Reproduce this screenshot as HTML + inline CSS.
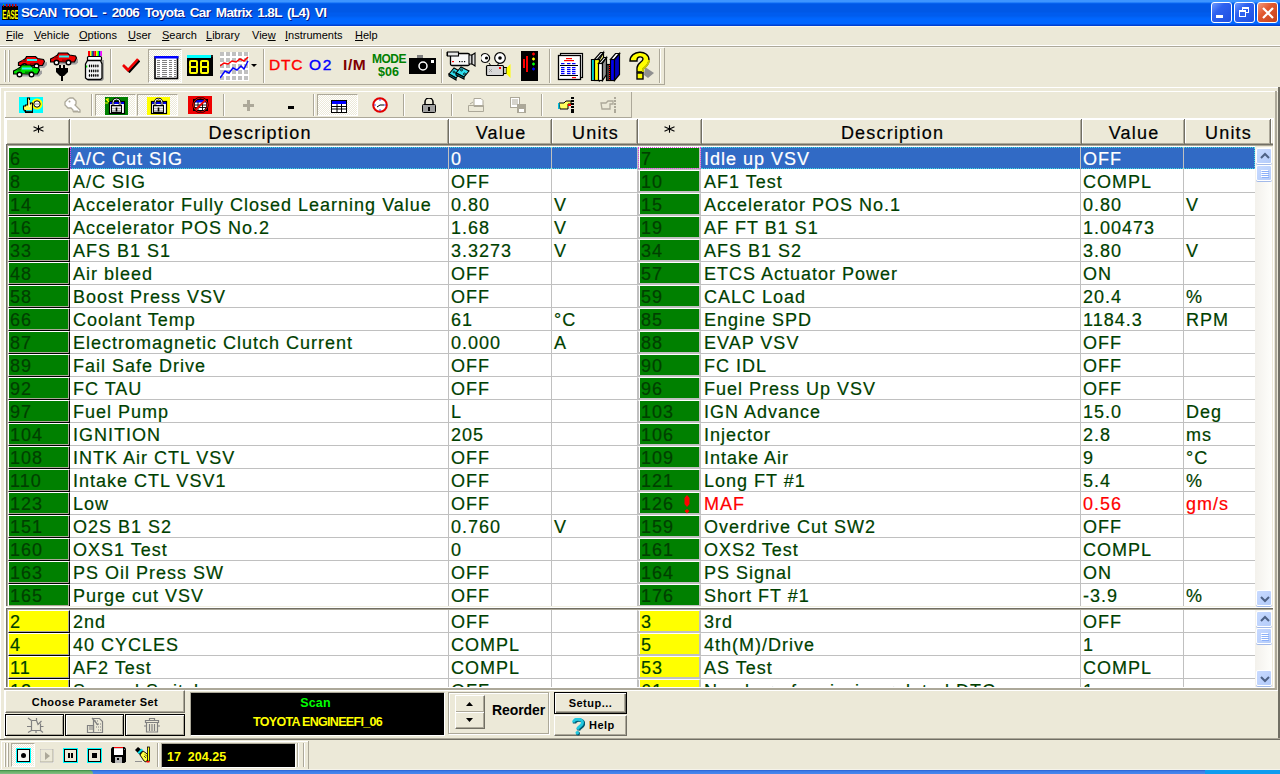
<!DOCTYPE html><html><head><meta charset="utf-8"><style>
*{margin:0;padding:0;box-sizing:border-box}
html,body{width:1280px;height:774px;overflow:hidden;background:#ECE9D8;font-family:"Liberation Sans",sans-serif}
#root{position:relative;width:1280px;height:774px;overflow:hidden}
.ab{position:absolute}
.t{position:absolute;white-space:nowrap}
.mi{position:absolute;top:25px;height:20px;line-height:20px;font-size:11px;color:#000}
.mi u{text-decoration:underline;text-underline-offset:1px;text-decoration-thickness:1px}
.row{position:absolute;height:23px;line-height:25px;font-size:18px;letter-spacing:1px;color:#003F00;white-space:nowrap;-webkit-text-stroke:0.2px currentColor}
.c{position:absolute;top:0;height:23px;overflow:hidden}
.hd{position:absolute;top:120px;height:24px;line-height:26px;font-size:18px;letter-spacing:1.2px;color:#000;text-align:center;-webkit-text-stroke:0.2px #000}
.sep{position:absolute;width:2px;border-left:1px solid #ACA899;border-right:1px solid #fff}
.dither{background-color:#F4F3EE;background-image:repeating-conic-gradient(#fff 0 25%,#ECE9D8 0 50%);background-size:2px 2px}
</style></head><body><div id="root">
<div class="ab" style="left:0;top:0;width:1280px;height:26px;background:linear-gradient(to bottom,#3D95FF 0px,#3D95FF 2px,#0A6AF5 3px,#0058E6 4px,#0058E6 12px,#005CEE 13px,#005CEE 16px,#0062F5 17px,#0066FF 19px,#0066FF 24px,#0040D0 25px,#0040D0 26px)"></div><svg class="ab" style="left:2px;top:3px" width="16" height="17" viewBox="0 0 16 17"><rect x="0" y="3" width="16" height="14" fill="#000"/><rect x="1" y="1" width="1" height="2" fill="#00FF00"/><rect x="1" y="2" width="1" height="2" fill="#C00000"/><rect x="4" y="1" width="1.5" height="3" fill="#C00000"/><rect x="7" y="1" width="1.5" height="3" fill="#C00000"/><rect x="10" y="1" width="1.5" height="3" fill="#C00000"/><rect x="13" y="1" width="1.5" height="3" fill="#C00000"/><g transform="translate(0.2,15.5) scale(0.47,1)"><text x="0" y="0" font-family="Liberation Sans" font-weight="bold" font-size="13.5" fill="#FFFF00" letter-spacing="-0.6">EASE</text></g></svg><div class="t" style="left:21px;top:4px;line-height:18px;font-size:13.5px;letter-spacing:-0.65px;word-spacing:2.5px;font-weight:bold;color:#fff;text-shadow:1px 1px 0 #0A1883">SCAN TOOL - 2006 Toyota Car Matrix 1.8L (L4) VI</div><div class="ab" style="left:1211px;top:2px;width:21px;height:21px;border:1px solid #fff;border-radius:3px;background:linear-gradient(135deg,#6F9BFF 0%,#2F62F0 35%,#1F4FE0 100%)"><div class="ab" style="left:4px;top:12px;width:7px;height:3px;background:#fff"></div></div><div class="ab" style="left:1234px;top:2px;width:21px;height:21px;border:1px solid #fff;border-radius:3px;background:linear-gradient(135deg,#6F9BFF 0%,#2F62F0 35%,#1F4FE0 100%)"><div class="ab" style="left:7px;top:4px;width:7px;height:6px;border:1px solid #fff;border-top-width:2px"></div><div class="ab" style="left:4px;top:7px;width:7px;height:7px;border:1px solid #fff;border-top-width:2px;background:#2F62F0"></div></div><div class="ab" style="left:1257px;top:2px;width:21px;height:21px;border:1px solid #fff;border-radius:3px;background:linear-gradient(135deg,#F19A7E 0%,#E2582F 40%,#C2421E 100%)"><svg class="ab" style="left:3px;top:3px" width="14" height="14"><path d="M2 2L12 12M12 2L2 12" stroke="#fff" stroke-width="2.2"/></svg></div><div class="ab" style="left:0;top:26px;width:1280px;height:1px;background:#FBF8EB"></div><div class="mi" style="left:6px"><u>F</u>ile</div><div class="mi" style="left:34px"><u>V</u>ehicle</div><div class="mi" style="left:79px"><u>O</u>ptions</div><div class="mi" style="left:128px"><u>U</u>ser</div><div class="mi" style="left:162px"><u>S</u>earch</div><div class="mi" style="left:206px"><u>L</u>ibrary</div><div class="mi" style="left:252px">Vie<u>w</u></div><div class="mi" style="left:285px"><u>I</u>nstruments</div><div class="mi" style="left:355px"><u>H</u>elp</div><div class="ab" style="left:0;top:45px;width:1280px;height:1px;background:#fff"></div><div class="ab" style="left:0;top:46px;width:1280px;height:1px;background:#ACA899"></div><div class="ab" style="left:0;top:47px;width:1280px;height:1px;background:#F3F1E6"></div><div class="ab" style="left:0;top:47px;width:664px;height:1px;background:#fff"></div><div class="ab" style="left:4px;top:50px;width:2px;height:32px;border-left:1px solid #fff;border-right:1px solid #ACA899"></div><div class="ab" style="left:8px;top:50px;width:2px;height:32px;border-left:1px solid #fff;border-right:1px solid #ACA899"></div><div class="ab" style="left:110px;top:49px;width:2px;height:34px;border-left:1px solid #ACA899;border-right:1px solid #fff"></div><div class="ab" style="left:263px;top:49px;width:2px;height:34px;border-left:1px solid #ACA899;border-right:1px solid #fff"></div><div class="ab" style="left:441px;top:49px;width:2px;height:34px;border-left:1px solid #ACA899;border-right:1px solid #fff"></div><div class="ab" style="left:549px;top:49px;width:2px;height:34px;border-left:1px solid #ACA899;border-right:1px solid #fff"></div><div class="ab" style="left:659px;top:49px;width:2px;height:34px;border-left:1px solid #ACA899;border-right:1px solid #fff"></div><div class="ab" style="left:664px;top:48px;width:1px;height:37px;background:#ACA899"></div><div class="ab" style="left:0;top:84px;width:665px;height:1px;background:#ACA899"></div><svg class="ab" style="left:13px;top:55px" width="34" height="23" viewBox="0 0 34 23"><g transform="translate(5,1)"><path d="M3 12 h23 l3 -3 v-3z" fill="#A0A0A0"/><path d="M0.5 6.5 L4.5 4.5 L7.5 2.5 L8.5 0.5 H17.5 L19.5 2.5 L25.5 3.5 L26.5 5.5 L24.5 9.5 H0.5 Z" fill="#F00000" stroke="#000" stroke-width="1.2"/><rect x="9" y="1.5" width="8" height="1.2" fill="#F00000"/><rect x="9" y="3" width="10" height="2" fill="#30F0F0"/><rect x="4" y="4" width="4" height="2" fill="#A00000"/><rect x="12" y="7" width="8" height="2" fill="#A00000"/><circle cx="6.5" cy="10" r="2.3" fill="#fff" stroke="#000" stroke-width="1.4"/><circle cx="18.5" cy="10" r="2.3" fill="#fff" stroke="#000" stroke-width="1.4"/></g><g transform="translate(0,9.5)"><path d="M3 12 h23 l3 -3 v-3z" fill="#A0A0A0"/><path d="M0.5 6.5 L4.5 4.5 L7.5 2.5 L8.5 0.5 H17.5 L19.5 2.5 L25.5 3.5 L26.5 5.5 L24.5 9.5 H0.5 Z" fill="#00E000" stroke="#000" stroke-width="1.2"/><rect x="9" y="1.5" width="8" height="1.2" fill="#00E000"/><rect x="9" y="3" width="10" height="2" fill="#30F0F0"/><rect x="4" y="4" width="4" height="2" fill="#008000"/><rect x="12" y="7" width="8" height="2" fill="#008000"/><circle cx="6.5" cy="10" r="2.3" fill="#fff" stroke="#000" stroke-width="1.4"/><circle cx="18.5" cy="10" r="2.3" fill="#fff" stroke="#000" stroke-width="1.4"/></g></svg><svg class="ab" style="left:50px;top:52px" width="28" height="30" viewBox="0 0 28 30"><g transform="translate(0,0.5)"><path d="M3 12 h23 l3 -3 v-3z" fill="#A0A0A0"/><path d="M0.5 6.5 L4.5 4.5 L7.5 2.5 L8.5 0.5 H17.5 L19.5 2.5 L25.5 3.5 L26.5 5.5 L24.5 9.5 H0.5 Z" fill="#F00000" stroke="#000" stroke-width="1.2"/><rect x="9" y="1.5" width="8" height="1.2" fill="#F00000"/><rect x="9" y="3" width="10" height="2" fill="#30F0F0"/><rect x="4" y="4" width="4" height="2" fill="#A00000"/><rect x="12" y="7" width="8" height="2" fill="#A00000"/><circle cx="6.5" cy="10" r="2.3" fill="#fff" stroke="#000" stroke-width="1.4"/><circle cx="18.5" cy="10" r="2.3" fill="#fff" stroke="#000" stroke-width="1.4"/></g><rect x="9" y="13" width="2" height="3" fill="#000"/><rect x="13" y="13" width="2" height="3" fill="#000"/><path d="M6 16 h12 v4 l-4 4 h-4 l-4 -4z" fill="#000"/><rect x="11" y="24" width="2" height="5" fill="#000"/></svg><svg class="ab" style="left:84px;top:51px" width="21" height="30" viewBox="0 0 21 30"><rect x="4" y="0" width="2" height="5" fill="#F00"/><rect x="6" y="0" width="1.5" height="5" fill="#FF0"/><rect x="7.5" y="0" width="1.5" height="5" fill="#008080"/><rect x="9" y="0" width="1.5" height="5" fill="#800080"/><rect x="10.5" y="0" width="1.5" height="5" fill="#F00"/><rect x="12" y="0" width="1.5" height="5" fill="#FF0"/><rect x="13.5" y="0" width="1.5" height="5" fill="#0F0"/><rect x="15" y="0" width="1.5" height="5" fill="#00F"/><rect x="16.5" y="0" width="1.5" height="5" fill="#F0F"/><path d="M19 9 v19 l-2 2 h-13" fill="none" stroke="#909090" stroke-width="1.5"/><rect x="3.5" y="5.5" width="14" height="4" rx="1" fill="#fff" stroke="#000" stroke-width="1.2"/><path d="M1.5 13 l2 -3.5 h13 l1.5 3.5 v14 l-1.5 1.5 h-13 l-2 -1.5z" fill="#F4F4F4" stroke="#000" stroke-width="1.3"/><ellipse cx="5.5" cy="15" rx=".7" ry="1.4" fill="#000"/><ellipse cx="5.5" cy="20" rx=".7" ry="1.4" fill="#000"/><ellipse cx="5.5" cy="24.5" rx=".7" ry="1.4" fill="#000"/><ellipse cx="7.6" cy="15" rx=".7" ry="1.4" fill="#000"/><ellipse cx="7.6" cy="20" rx=".7" ry="1.4" fill="#000"/><ellipse cx="7.6" cy="24.5" rx=".7" ry="1.4" fill="#000"/><ellipse cx="9.7" cy="15" rx=".7" ry="1.4" fill="#000"/><ellipse cx="9.7" cy="20" rx=".7" ry="1.4" fill="#000"/><ellipse cx="9.7" cy="24.5" rx=".7" ry="1.4" fill="#000"/><ellipse cx="11.8" cy="15" rx=".7" ry="1.4" fill="#000"/><ellipse cx="11.8" cy="20" rx=".7" ry="1.4" fill="#000"/><ellipse cx="11.8" cy="24.5" rx=".7" ry="1.4" fill="#000"/><ellipse cx="13.9" cy="15" rx=".7" ry="1.4" fill="#000"/><ellipse cx="13.9" cy="20" rx=".7" ry="1.4" fill="#000"/><ellipse cx="13.9" cy="24.5" rx=".7" ry="1.4" fill="#000"/><rect x="2" y="14.5" width="1.3" height="2" fill="#0D0"/></svg><svg class="ab" style="left:122px;top:57px" width="18" height="16" viewBox="0 0 18 16"><path d="M1.5 8.5 L6.5 13.5 L16.5 2.5" fill="none" stroke="#000" stroke-width="2.4" transform="translate(1,1)"/><path d="M1 8 L6 13 L16 2" fill="none" stroke="#F00000" stroke-width="2.6"/></svg><div class="ab dither" style="left:148px;top:49px;width:34px;height:34px;border-left:1px solid #ACA899;border-top:1px solid #ACA899;border-right:1px solid #fff;border-bottom:1px solid #fff"></div><svg class="ab" style="left:154px;top:56px" width="25" height="24" viewBox="0 0 25 24"><rect x="1" y="1" width="22.5" height="21.5" fill="#fff" stroke="#000" stroke-width="1.6"/><rect x="0.5" y="0" width="24" height="2.5" fill="#0000FF"/><g fill="#808080"><rect x="3" y="4" width="3" height="1"/><rect x="8" y="4" width="5" height="1"/><rect x="15" y="4" width="3" height="1"/><rect x="20" y="4" width="2" height="1"/></g><g fill="#808080"><rect x="3" y="6" width="3" height="1"/><rect x="8" y="6" width="5" height="1"/><rect x="15" y="6" width="3" height="1"/><rect x="20" y="6" width="2" height="1"/></g><g fill="#808080"><rect x="3" y="8" width="3" height="1"/><rect x="8" y="8" width="5" height="1"/><rect x="15" y="8" width="3" height="1"/><rect x="20" y="8" width="2" height="1"/></g><g fill="#808080"><rect x="3" y="10" width="3" height="1"/><rect x="8" y="10" width="5" height="1"/><rect x="15" y="10" width="3" height="1"/><rect x="20" y="10" width="2" height="1"/></g><g fill="#808080"><rect x="3" y="12" width="3" height="1"/><rect x="8" y="12" width="5" height="1"/><rect x="15" y="12" width="3" height="1"/><rect x="20" y="12" width="2" height="1"/></g><g fill="#808080"><rect x="3" y="14" width="3" height="1"/><rect x="8" y="14" width="5" height="1"/><rect x="15" y="14" width="3" height="1"/><rect x="20" y="14" width="2" height="1"/></g><g fill="#808080"><rect x="3" y="16" width="3" height="1"/><rect x="8" y="16" width="5" height="1"/><rect x="15" y="16" width="3" height="1"/><rect x="20" y="16" width="2" height="1"/></g><g fill="#808080"><rect x="3" y="18" width="3" height="1"/><rect x="8" y="18" width="5" height="1"/><rect x="15" y="18" width="3" height="1"/><rect x="20" y="18" width="2" height="1"/></g><g fill="#808080"><rect x="3" y="20" width="3" height="1"/><rect x="8" y="20" width="5" height="1"/><rect x="15" y="20" width="3" height="1"/><rect x="20" y="20" width="2" height="1"/></g></svg><svg class="ab" style="left:187px;top:55px" width="26" height="21" viewBox="0 0 26 21"><rect x="0" y="0" width="26" height="3" fill="#00FFFF"/><rect x="0" y="3" width="26" height="18" fill="#000"/><rect x="24" y="0" width="2" height="3" fill="#000"/><rect x="24.5" y=".5" width="1" height="1" fill="#808080"/><g fill="none" stroke="#FFFF00" stroke-width="2"><rect x="3" y="6" width="7" height="6" rx="1"/><rect x="3" y="12" width="7" height="6" rx="1"/></g><g fill="none" stroke="#FFFF00" stroke-width="2"><rect x="14" y="6" width="7" height="6" rx="1"/><rect x="14" y="12" width="7" height="6" rx="1"/></g></svg><svg class="ab" style="left:220px;top:52px" width="29" height="29" viewBox="0 0 29 29"><rect width="29" height="29" fill="#fff"/><rect x="0" y="0" width="4" height="4" fill="#C0C0C0"/><rect x="0" y="6" width="4" height="4" fill="#C0C0C0"/><rect x="0" y="12" width="4" height="4" fill="#C0C0C0"/><rect x="0" y="18" width="4" height="4" fill="#C0C0C0"/><rect x="0" y="24" width="4" height="4" fill="#C0C0C0"/><rect x="6" y="0" width="4" height="4" fill="#C0C0C0"/><rect x="6" y="6" width="4" height="4" fill="#C0C0C0"/><rect x="6" y="12" width="4" height="4" fill="#C0C0C0"/><rect x="6" y="18" width="4" height="4" fill="#C0C0C0"/><rect x="6" y="24" width="4" height="4" fill="#C0C0C0"/><rect x="12" y="0" width="4" height="4" fill="#C0C0C0"/><rect x="12" y="6" width="4" height="4" fill="#C0C0C0"/><rect x="12" y="12" width="4" height="4" fill="#C0C0C0"/><rect x="12" y="18" width="4" height="4" fill="#C0C0C0"/><rect x="12" y="24" width="4" height="4" fill="#C0C0C0"/><rect x="18" y="0" width="4" height="4" fill="#C0C0C0"/><rect x="18" y="6" width="4" height="4" fill="#C0C0C0"/><rect x="18" y="12" width="4" height="4" fill="#C0C0C0"/><rect x="18" y="18" width="4" height="4" fill="#C0C0C0"/><rect x="18" y="24" width="4" height="4" fill="#C0C0C0"/><rect x="24" y="0" width="4" height="4" fill="#C0C0C0"/><rect x="24" y="6" width="4" height="4" fill="#C0C0C0"/><rect x="24" y="12" width="4" height="4" fill="#C0C0C0"/><rect x="24" y="18" width="4" height="4" fill="#C0C0C0"/><rect x="24" y="24" width="4" height="4" fill="#C0C0C0"/><polyline points="0,14 4,11 8,12 12,9 16,10 20,7 24,9 28,5" fill="none" stroke="#F00" stroke-width="1.5"/><polyline points="0,26 5,19 9,21 13,16 17,18 21,14 24,17 28,9" fill="none" stroke="#00F" stroke-width="1.5"/></svg><svg class="ab" style="left:251px;top:64px" width="7" height="4" viewBox="0 0 7 4"><path d="M0 0h6l-3 3z" fill="#000"/></svg><div class="t" style="left:269px;top:56px;font-size:15.5px;line-height:18px;color:#FF0000;letter-spacing:0.8px;-webkit-text-stroke:0.4px #FF0000">DTC</div><div class="t" style="left:309px;top:56px;font-size:15.5px;line-height:18px;color:#0000FF;letter-spacing:1.6px;-webkit-text-stroke:0.4px #0000FF">O2</div><div class="t" style="left:343px;top:56px;font-size:15.5px;line-height:18px;font-weight:bold;color:#800000;letter-spacing:0.6px">I/M</div><div class="t" style="left:372px;top:52px;font-size:12px;line-height:14px;font-weight:bold;color:#008000;letter-spacing:-0.5px">MODE</div><div class="t" style="left:378px;top:65px;font-size:12.5px;line-height:14px;font-weight:bold;color:#008000">$06</div><svg class="ab" style="left:409px;top:55px" width="28" height="20" viewBox="0 0 28 20"><rect x="8" y="0" width="6" height="3" fill="#808080"/><rect x="0" y="3" width="27" height="16" fill="#000"/><circle cx="14" cy="11" r="4" fill="none" stroke="#fff" stroke-width="1.5"/><rect x="22" y="5" width="3" height="3" fill="#fff"/></svg><svg class="ab" style="left:446px;top:51px" width="32" height="30" viewBox="0 0 32 30"><path d="M5 14 h18 l-1 1 h-16z" fill="#909090"/><rect x="4.5" y="2.5" width="19" height="12" rx="1.5" fill="#F8F8F8" stroke="#000" stroke-width="1.3"/><rect x="1.5" y="1" width="11" height="4" fill="#E8E8E8" stroke="#000" stroke-width="1.1"/><rect x=".5" y="1" width="1.5" height="4" fill="#000"/><rect x="23" y="4" width="3" height="9" fill="#D0D0D0" stroke="#000" stroke-width="1"/><path d="M26 4 l3 -2 v13 l-3 -2z" fill="#E0E0E0" stroke="#000" stroke-width="1.1"/><rect x="6" y="10" width="2" height="1.2" fill="#F00"/><rect x="13" y="10" width="1.2" height="1.2" fill="#000"/><rect x="15.5" y="10" width="1.2" height="1.2" fill="#000"/><rect x="18" y="10" width="1.2" height="1.2" fill="#000"/><g stroke="#000" stroke-width="1.1"><path d="M3 23 l5 -6 l7 4 l-5 6z" fill="#30E0F0"/><path d="M3 23 v2 l7 4 v-2z" fill="#108090"/><path d="M10 22 l5 -6 l8 4 l-5 6z" fill="#30E0F0"/><path d="M10 22 v2 l8 4 v-2z" fill="#108090"/></g><circle cx="8" cy="21" r="1" fill="none" stroke="#000" stroke-width=".8"/><circle cx="15.5" cy="19" r="1" fill="none" stroke="#000" stroke-width=".8"/><circle cx="18.5" cy="23" r="1" fill="none" stroke="#000" stroke-width=".8"/></svg><svg class="ab" style="left:481px;top:52px" width="30" height="26" viewBox="0 0 30 26"><path d="M4 10.5 a4.5 4.5 0 1 1 .1 0z" fill="#fff" stroke="#000" stroke-width="1.2"/><circle cx="5.5" cy="6" r="1.6" fill="#000"/><circle cx="19" cy="6" r="5.3" fill="#fff" stroke="#000" stroke-width="1.2"/><circle cx="19" cy="6" r="1.8" fill="#000"/><path d="M8 11 l2 3 M18 11 l-2 3" stroke="#000" stroke-width="1"/><rect x="5.5" y="13.5" width="17" height="10" rx="1" fill="#D8D8D8" stroke="#000" stroke-width="1.2"/><rect x="18" y="15" width="2" height="2" fill="#F00"/><path d="M8 17 l3 3 M11 17 l-3 3" stroke="#909090" stroke-width=".8"/><rect x="22.5" y="15.5" width="3" height="6" fill="#C0C0C0" stroke="#000" stroke-width="1"/><path d="M25.5 16 l4 -4 v14 l-4 -4z" fill="#FFFF00"/></svg><svg class="ab" style="left:521px;top:51px" width="17" height="30" viewBox="0 0 17 30"><rect width="17" height="30" fill="#000"/><rect x="2" y="8" width="2" height="9" fill="#F00"/><rect x="5" y="5" width="2" height="16" fill="#F00"/><path d="M11 3h3M12.5 1.5v3" stroke="#F00" stroke-width="1.3"/><path d="M11 8h3M12.5 6.5v3" stroke="#FF0" stroke-width="1.3"/><path d="M11 13h3M12.5 11.5v3" stroke="#0F0" stroke-width="1.3"/><path d="M11 18h3M12.5 16.5v3" stroke="#00F" stroke-width="1.3"/></svg><svg class="ab" style="left:557px;top:52px" width="27" height="29" viewBox="0 0 27 29"><rect x="3.5" y="1.5" width="22" height="24" fill="#fff" stroke="#000" stroke-width="1.2"/><rect x="1.5" y="3.5" width="22" height="24" fill="#fff" stroke="#000" stroke-width="1.3"/><rect x="9" y="6" width="6" height="1.2" fill="#F00"/><rect x="7" y="8" width="10" height="1.2" fill="#F00"/><rect x="3" y="13" width="18" height="1" fill="#000"/><rect x="3" y="23" width="18" height="1" fill="#000"/><rect x="4" y="11" width="3.5" height="1.2" fill="#00F"/><rect x="4" y="15" width="3.5" height="1.2" fill="#00F"/><rect x="4" y="17" width="3.5" height="1.2" fill="#00F"/><rect x="4" y="19" width="3.5" height="1.2" fill="#00F"/><rect x="4" y="21" width="3.5" height="1.2" fill="#00F"/><rect x="10" y="11" width="3.5" height="1.2" fill="#00F"/><rect x="10" y="15" width="3.5" height="1.2" fill="#00F"/><rect x="10" y="17" width="3.5" height="1.2" fill="#00F"/><rect x="10" y="19" width="3.5" height="1.2" fill="#00F"/><rect x="10" y="21" width="3.5" height="1.2" fill="#00F"/><rect x="15" y="11" width="3.5" height="1.2" fill="#00F"/><rect x="15" y="15" width="3.5" height="1.2" fill="#00F"/><rect x="15" y="17" width="3.5" height="1.2" fill="#00F"/><rect x="15" y="19" width="3.5" height="1.2" fill="#00F"/><rect x="15" y="21" width="3.5" height="1.2" fill="#00F"/><rect x="15" y="25" width="4" height="1.2" fill="#F00"/></svg><svg class="ab" style="left:589px;top:50px" width="33" height="32" viewBox="0 0 33 32"><g stroke="#000" stroke-width="1.2"><path d="M2.5 9.5 h3 v21 h-3z" fill="#00E0E0"/><path d="M5.5 9.5 l6 -7 h3 l-6 7z" fill="#fff"/><rect x="5.5" y="9.5" width="5" height="21" fill="#FFFF00"/><path d="M10.5 9.5 l4 -7 v21 l-4 7z" fill="#FFFF80"/><path d="M9.5 13.5 l5 -6 h3 l-5 6z" fill="#fff"/><rect x="9.5" y="13.5" width="4" height="17" fill="#fff"/><path d="M13.5 13.5 l4 -6 v17 l-4 6z" fill="#909090"/><rect x="17.5" y="14.5" width="3" height="16" fill="#404040"/><path d="M21.5 9.5 l5 -6 h4 l-5 6z" fill="#fff"/><rect x="21.5" y="9.5" width="4" height="21" fill="#0000F0"/><path d="M25.5 9.5 l5 -6 v21 l-5 6z" fill="#0000C0"/></g><path d="M20.5 15v15" stroke="#F00" stroke-width="1" stroke-dasharray="1 1"/></svg><svg class="ab" style="left:628px;top:50px" width="28" height="31" viewBox="0 0 28 31"><path d="M17 17 l9 6 l-6 5 l-4 -3z" fill="#909090"/><path d="M2 11 C2 0 21 -1 21 10 C21 15 17 17 15 19 v3 h-6 v-4 C9 13 15 12 15 9 C15 6 9 6 9 10 v1z" fill="#FFFF00" stroke="#000" stroke-width="1.4"/><path d="M21 10 C21 15 17 17 15 19 v3" fill="none" stroke="#C8C800" stroke-width="2"/><rect x="9" y="23" width="6" height="6" fill="#FFFF00" stroke="#000" stroke-width="1.4"/></svg><div class="ab" style="left:0;top:87px;width:1280px;height:1px;background:#fff"></div><div class="ab" style="left:0;top:87px;width:1px;height:652px;background:#fff"></div><div class="ab" style="left:4px;top:91px;width:1276px;height:1px;background:#fff"></div><div class="ab" style="left:4px;top:91px;width:2px;height:647px;background:#fff"></div><div class="ab" style="left:631px;top:92px;width:1px;height:26px;background:#ACA899"></div><div class="ab" style="left:5px;top:117px;width:627px;height:1px;background:#ACA899"></div><div class="ab" style="left:91px;top:94px;width:2px;height:22px;border-left:1px solid #ACA899;border-right:1px solid #fff"></div><div class="ab" style="left:223px;top:94px;width:2px;height:22px;border-left:1px solid #ACA899;border-right:1px solid #fff"></div><div class="ab" style="left:313px;top:94px;width:2px;height:22px;border-left:1px solid #ACA899;border-right:1px solid #fff"></div><div class="ab" style="left:403px;top:94px;width:2px;height:22px;border-left:1px solid #ACA899;border-right:1px solid #fff"></div><div class="ab" style="left:451px;top:94px;width:2px;height:22px;border-left:1px solid #ACA899;border-right:1px solid #fff"></div><div class="ab" style="left:541px;top:94px;width:2px;height:22px;border-left:1px solid #ACA899;border-right:1px solid #fff"></div><div class="ab dither" style="left:95px;top:94px;width:41px;height:22px;border-left:1px solid #ACA899;border-top:1px solid #ACA899;border-right:1px solid #fff;border-bottom:1px solid #fff"></div><div class="ab dither" style="left:137px;top:94px;width:41px;height:22px;border-left:1px solid #ACA899;border-top:1px solid #ACA899;border-right:1px solid #fff;border-bottom:1px solid #fff"></div><div class="ab dither" style="left:317px;top:94px;width:41px;height:22px;border-left:1px solid #ACA899;border-top:1px solid #ACA899;border-right:1px solid #fff;border-bottom:1px solid #fff"></div><svg class="ab" style="left:19px;top:97px" width="25" height="16" viewBox="0 0 25 16"><rect width="24" height="16" fill="#00FFFF"/><circle cx="18" cy="7" r="5.5" fill="#FFFF00"/><circle cx="18" cy="7" r="3.2" fill="#fff" stroke="#000" stroke-width="1"/><path d="M15.5 7h5" stroke="#888" stroke-width="1"/><path d="M8.5 1 h2 v6 l1 0 v-1 h2 v7 l-1 1 h-7 l-1 -2 v-3 h2 v-1 h2z" fill="#FFFF60" stroke="#000" stroke-width="1.1"/><path d="M10.5 3v7" stroke="#fff" stroke-width=".8"/><rect x="6" y="13" width="8" height="3" fill="#000"/><rect x="7" y="13" width="6" height="1.2" fill="#00E0E0"/></svg><svg class="ab" style="left:64px;top:97px" width="17" height="16" viewBox="0 0 17 16"><path d="M6 1 h3 l3 3 v3 l-1 1 l5 5 v2 h-2 l-1 -1 l-1 1 l-1 -1 l-1 1 l-1 -1 v-1 l-2 -2 h-3 l-3 -3 v-3 l3 -3z" fill="#fff" stroke="#ACA899" stroke-width="1.3"/><circle cx="5.5" cy="4.5" r="1" fill="#ACA899"/></svg><svg class="ab" style="left:105px;top:97px" width="23" height="18" viewBox="0 0 23 18"><rect width="23" height="18" fill="#008000"/><rect x="4.5" y="4.5" width="15" height="12" fill="#fff" stroke="#000" stroke-width="1.2"/><rect x="5" y="5" width="14" height="2" fill="#0000F0"/><path d="M8 9 v-3.5 a3.5 3.5 0 0 1 7 0 v3.5" fill="none" stroke="#000" stroke-width="2.4"/><path d="M8 9 v-3.5 a3.5 3.5 0 0 1 7 0 v3.5" fill="none" stroke="#fff" stroke-width="1"/><rect x="6.5" y="8.5" width="10" height="7" fill="#B8B8B8" stroke="#000" stroke-width="1"/><path d="M7 10.5h9M7 12.5h9" stroke="#fff" stroke-width=".8"/><path d="M11.5 10.5v4" stroke="#000" stroke-width="1.6"/><path d="M1 2 l3 3 M0 6 h3 M3 1 v3" stroke="#FFFF00" stroke-width="1.2"/></svg><svg class="ab" style="left:147px;top:97px" width="24" height="18" viewBox="0 0 24 18"><rect width="23" height="18" fill="#FFFF00"/><rect x="4.5" y="4.5" width="15" height="12" fill="#fff" stroke="#000" stroke-width="1.2"/><rect x="5" y="5" width="14" height="2" fill="#0000F0"/><path d="M8 9 v-3.5 a3.5 3.5 0 0 1 7 0 v3.5" fill="none" stroke="#000" stroke-width="2.4"/><path d="M8 9 v-3.5 a3.5 3.5 0 0 1 7 0 v3.5" fill="none" stroke="#fff" stroke-width="1"/><rect x="6.5" y="8.5" width="10" height="7" fill="#B8B8B8" stroke="#000" stroke-width="1"/><path d="M7 10.5h9M7 12.5h9" stroke="#fff" stroke-width=".8"/><path d="M11.5 10.5v4" stroke="#000" stroke-width="1.6"/></svg><svg class="ab" style="left:188px;top:96px" width="24" height="18" viewBox="0 0 24 18"><rect width="24" height="18" fill="#F00000"/><rect x="5.5" y="3.5" width="14" height="11" fill="#fff" stroke="#000"/><rect x="6" y="4" width="13" height="2.5" fill="#0000F0"/><path d="M6 9h13M6 11.5h13M10 6v8M14.5 6v8" stroke="#000" stroke-width=".9"/><circle cx="12.5" cy="9" r="7" fill="none" stroke="#000" stroke-width="2.2"/><circle cx="12.5" cy="9" r="7" fill="none" stroke="#F00000" stroke-width="1"/><path d="M7.5 14 L17.5 4" stroke="#F00000" stroke-width="1.8"/></svg><div class="ab" style="left:243px;top:104px;width:11px;height:3px;background:#ACA899"></div><div class="ab" style="left:247px;top:100px;width:3px;height:11px;background:#ACA899"></div><div class="ab" style="left:288px;top:106px;width:6px;height:3px;background:#000"></div><svg class="ab" style="left:331px;top:100px" width="16" height="13" viewBox="0 0 16 13"><rect x=".5" y=".5" width="15" height="12" fill="#fff" stroke="#000"/><rect x="1" y="1" width="14" height="3" fill="#00f"/><path d="M1 6.5h14M1 9h14M6 4v9M10.5 4v9" stroke="#000" stroke-width="1"/></svg><svg class="ab" style="left:372px;top:97px" width="16" height="16" viewBox="0 0 16 16"><circle cx="8" cy="8" r="6.8" fill="#fff" stroke="#E00000" stroke-width="2"/><path d="M8 8 h4 M8 8 l-3 2" stroke="#000" stroke-width="1"/><circle cx="8" cy="3" r=".7" fill="#00f"/><circle cx="13" cy="8" r=".7" fill="#00f"/><circle cx="8" cy="13" r=".7" fill="#00f"/><circle cx="3" cy="8" r=".7" fill="#00f"/></svg><svg class="ab" style="left:422px;top:98px" width="14" height="15" viewBox="0 0 14 15"><path d="M3 7 v-3 a4 4 0 0 1 8 0 v3" fill="none" stroke="#000" stroke-width="1.5"/><rect x=".5" y="6.5" width="13" height="8" rx="1" fill="#A0A0A0" stroke="#000"/><rect x="6" y="9" width="2" height="4" fill="#000"/></svg><svg class="ab" style="left:468px;top:98px" width="17" height="14" viewBox="0 0 17 14"><path d="M6 .5h7l2 2v6h-9z" fill="#fff" stroke="#ACA899"/><path d="M.5 7.5h15v6h-15z" fill="none" stroke="#ACA899"/><path d="M2 6 l3 -2" stroke="#ACA899"/></svg><svg class="ab" style="left:510px;top:97px" width="17" height="16" viewBox="0 0 17 16"><rect x=".5" y=".5" width="9" height="10" fill="#fff" stroke="#ACA899"/><path d="M2 3h6M2 5h6M2 7h6" stroke="#ACA899"/><rect x="7" y="7" width="9" height="9" fill="#ACA899"/><rect x="9" y="12" width="5" height="3" fill="#fff"/></svg><svg class="ab" style="left:558px;top:97px" width="17" height="16" viewBox="0 0 17 16"><path d="M1 6 h5 l2 -2 h5 v3 h-3 v5 h-8z" fill="#FFFF60" stroke="#000"/><rect x="0" y="6" width="1.5" height="6" fill="#00C0E0"/><rect x="10" y="7" width="3" height="2" fill="#f00"/><rect x="13" y="0" width="3" height="2" fill="#000"/><rect x="13" y="3" width="3" height="2" fill="#000"/><rect x="13" y="6" width="3" height="2" fill="#000"/><rect x="13" y="9" width="3" height="2" fill="#000"/><rect x="13" y="12" width="3" height="2" fill="#000"/><rect x="13" y="14" width="3" height="2" fill="#000"/></svg><svg class="ab" style="left:600px;top:97px" width="17" height="16" viewBox="0 0 17 16"><path d="M1 6 h5 l2 -2 h5 v3 h-3 v5 h-8z" fill="none" stroke="#ACA899" stroke-width="1.3"/><rect x="14" y="0" width="2" height="2" fill="#ACA899"/><rect x="14" y="3" width="2" height="2" fill="#ACA899"/><rect x="14" y="6" width="2" height="2" fill="#ACA899"/><rect x="14" y="9" width="2" height="2" fill="#ACA899"/><rect x="14" y="12" width="2" height="2" fill="#ACA899"/><rect x="14" y="14" width="2" height="2" fill="#ACA899"/></svg><div class="ab" style="left:8px;top:146px;width:1247px;height:461px;background:#fff"></div><div class="ab" style="left:8px;top:610px;width:1247px;height:77px;background:#fff"></div><div class="ab" style="left:0;top:147px;width:1255px;height:459px;overflow:hidden"><div class="ab" style="left:70px;top:0px;width:567px;height:22px;background:#316AC5"></div><div class="ab" style="left:701px;top:0px;width:554px;height:22px;background:#316AC5"></div><div class="ab" style="left:70px;top:0px;width:567px;height:0;border-top:1px dotted #40E0E0"></div><div class="ab" style="left:70px;top:21px;width:567px;height:0;border-top:1px dotted #40E0E0"></div><div class="ab" style="left:701px;top:0px;width:554px;height:0;border-top:1px dotted #40E0E0"></div><div class="ab" style="left:701px;top:21px;width:554px;height:0;border-top:1px dotted #40E0E0"></div><div class="ab" style="left:70px;top:0px;width:0;height:22px;border-left:1px dotted #E040E0"></div><div class="ab" style="left:1254px;top:0px;width:0;height:22px;border-left:1px dotted #40E0E0"></div><div class="ab" style="left:8px;top:0px;width:62px;height:23px;background:#008000;border-top:1px solid #fff;border-left:1px solid #fff;border-right:1px solid #000;border-bottom:1px solid #000;box-shadow:inset -1px -1px 0 #ACA899"></div><div class="ab" style="left:637px;top:0px;width:64px;height:23px;background:#008000;border-top:1px solid #fff;border-left:2px solid #C0C0C0;border-right:2px solid #C0C0C0;border-bottom:2px solid #C0C0C0;box-shadow:inset 1px 0 0 #fff"></div><div class="ab" style="left:638px;top:0px;width:63px;height:22px;border:1px dotted #E040E0"></div><div class="row" style="left:10px;top:0px;color:#003F00">6</div><div class="row" style="left:73px;top:0px;color:#fff">A/C Cut SIG</div><div class="row" style="left:451px;top:0px;color:#fff">0</div><div class="row" style="left:641px;top:0px;color:#003F00">7</div><div class="row" style="left:704px;top:0px;color:#fff">Idle up VSV</div><div class="row" style="left:1083px;top:0px;color:#fff">OFF</div><div class="ab" style="left:70px;top:45px;width:567px;height:1px;background:#C0C0C0"></div><div class="ab" style="left:701px;top:45px;width:554px;height:1px;background:#C0C0C0"></div><div class="ab" style="left:8px;top:23px;width:62px;height:23px;background:#008000;border-top:1px solid #fff;border-left:1px solid #fff;border-right:1px solid #000;border-bottom:1px solid #000;box-shadow:inset -1px -1px 0 #ACA899"></div><div class="ab" style="left:637px;top:23px;width:64px;height:23px;background:#008000;border-top:1px solid #fff;border-left:2px solid #C0C0C0;border-right:2px solid #C0C0C0;border-bottom:2px solid #C0C0C0;box-shadow:inset 1px 0 0 #fff"></div><div class="row" style="left:10px;top:23px;color:#003F00">8</div><div class="row" style="left:73px;top:23px;color:#003F00">A/C SIG</div><div class="row" style="left:451px;top:23px;color:#003F00">OFF</div><div class="row" style="left:641px;top:23px;color:#003F00">10</div><div class="row" style="left:704px;top:23px;color:#003F00">AF1 Test</div><div class="row" style="left:1083px;top:23px;color:#003F00">COMPL</div><div class="ab" style="left:70px;top:68px;width:567px;height:1px;background:#C0C0C0"></div><div class="ab" style="left:701px;top:68px;width:554px;height:1px;background:#C0C0C0"></div><div class="ab" style="left:8px;top:46px;width:62px;height:23px;background:#008000;border-top:1px solid #fff;border-left:1px solid #fff;border-right:1px solid #000;border-bottom:1px solid #000;box-shadow:inset -1px -1px 0 #ACA899"></div><div class="ab" style="left:637px;top:46px;width:64px;height:23px;background:#008000;border-top:1px solid #fff;border-left:2px solid #C0C0C0;border-right:2px solid #C0C0C0;border-bottom:2px solid #C0C0C0;box-shadow:inset 1px 0 0 #fff"></div><div class="row" style="left:10px;top:46px;color:#003F00">14</div><div class="row" style="left:73px;top:46px;color:#003F00">Accelerator Fully Closed Learning Value</div><div class="row" style="left:451px;top:46px;color:#003F00">0.80</div><div class="row" style="left:554px;top:46px;color:#003F00">V</div><div class="row" style="left:641px;top:46px;color:#003F00">15</div><div class="row" style="left:704px;top:46px;color:#003F00">Accelerator POS No.1</div><div class="row" style="left:1083px;top:46px;color:#003F00">0.80</div><div class="row" style="left:1186px;top:46px;color:#003F00">V</div><div class="ab" style="left:70px;top:91px;width:567px;height:1px;background:#C0C0C0"></div><div class="ab" style="left:701px;top:91px;width:554px;height:1px;background:#C0C0C0"></div><div class="ab" style="left:8px;top:69px;width:62px;height:23px;background:#008000;border-top:1px solid #fff;border-left:1px solid #fff;border-right:1px solid #000;border-bottom:1px solid #000;box-shadow:inset -1px -1px 0 #ACA899"></div><div class="ab" style="left:637px;top:69px;width:64px;height:23px;background:#008000;border-top:1px solid #fff;border-left:2px solid #C0C0C0;border-right:2px solid #C0C0C0;border-bottom:2px solid #C0C0C0;box-shadow:inset 1px 0 0 #fff"></div><div class="row" style="left:10px;top:69px;color:#003F00">16</div><div class="row" style="left:73px;top:69px;color:#003F00">Accelerator POS No.2</div><div class="row" style="left:451px;top:69px;color:#003F00">1.68</div><div class="row" style="left:554px;top:69px;color:#003F00">V</div><div class="row" style="left:641px;top:69px;color:#003F00">19</div><div class="row" style="left:704px;top:69px;color:#003F00">AF FT B1 S1</div><div class="row" style="left:1083px;top:69px;color:#003F00">1.00473</div><div class="ab" style="left:70px;top:114px;width:567px;height:1px;background:#C0C0C0"></div><div class="ab" style="left:701px;top:114px;width:554px;height:1px;background:#C0C0C0"></div><div class="ab" style="left:8px;top:92px;width:62px;height:23px;background:#008000;border-top:1px solid #fff;border-left:1px solid #fff;border-right:1px solid #000;border-bottom:1px solid #000;box-shadow:inset -1px -1px 0 #ACA899"></div><div class="ab" style="left:637px;top:92px;width:64px;height:23px;background:#008000;border-top:1px solid #fff;border-left:2px solid #C0C0C0;border-right:2px solid #C0C0C0;border-bottom:2px solid #C0C0C0;box-shadow:inset 1px 0 0 #fff"></div><div class="row" style="left:10px;top:92px;color:#003F00">33</div><div class="row" style="left:73px;top:92px;color:#003F00">AFS B1 S1</div><div class="row" style="left:451px;top:92px;color:#003F00">3.3273</div><div class="row" style="left:554px;top:92px;color:#003F00">V</div><div class="row" style="left:641px;top:92px;color:#003F00">34</div><div class="row" style="left:704px;top:92px;color:#003F00">AFS B1 S2</div><div class="row" style="left:1083px;top:92px;color:#003F00">3.80</div><div class="row" style="left:1186px;top:92px;color:#003F00">V</div><div class="ab" style="left:70px;top:137px;width:567px;height:1px;background:#C0C0C0"></div><div class="ab" style="left:701px;top:137px;width:554px;height:1px;background:#C0C0C0"></div><div class="ab" style="left:8px;top:115px;width:62px;height:23px;background:#008000;border-top:1px solid #fff;border-left:1px solid #fff;border-right:1px solid #000;border-bottom:1px solid #000;box-shadow:inset -1px -1px 0 #ACA899"></div><div class="ab" style="left:637px;top:115px;width:64px;height:23px;background:#008000;border-top:1px solid #fff;border-left:2px solid #C0C0C0;border-right:2px solid #C0C0C0;border-bottom:2px solid #C0C0C0;box-shadow:inset 1px 0 0 #fff"></div><div class="row" style="left:10px;top:115px;color:#003F00">48</div><div class="row" style="left:73px;top:115px;color:#003F00">Air bleed</div><div class="row" style="left:451px;top:115px;color:#003F00">OFF</div><div class="row" style="left:641px;top:115px;color:#003F00">57</div><div class="row" style="left:704px;top:115px;color:#003F00">ETCS Actuator Power</div><div class="row" style="left:1083px;top:115px;color:#003F00">ON</div><div class="ab" style="left:70px;top:160px;width:567px;height:1px;background:#C0C0C0"></div><div class="ab" style="left:701px;top:160px;width:554px;height:1px;background:#C0C0C0"></div><div class="ab" style="left:8px;top:138px;width:62px;height:23px;background:#008000;border-top:1px solid #fff;border-left:1px solid #fff;border-right:1px solid #000;border-bottom:1px solid #000;box-shadow:inset -1px -1px 0 #ACA899"></div><div class="ab" style="left:637px;top:138px;width:64px;height:23px;background:#008000;border-top:1px solid #fff;border-left:2px solid #C0C0C0;border-right:2px solid #C0C0C0;border-bottom:2px solid #C0C0C0;box-shadow:inset 1px 0 0 #fff"></div><div class="row" style="left:10px;top:138px;color:#003F00">58</div><div class="row" style="left:73px;top:138px;color:#003F00">Boost Press VSV</div><div class="row" style="left:451px;top:138px;color:#003F00">OFF</div><div class="row" style="left:641px;top:138px;color:#003F00">59</div><div class="row" style="left:704px;top:138px;color:#003F00">CALC Load</div><div class="row" style="left:1083px;top:138px;color:#003F00">20.4</div><div class="row" style="left:1186px;top:138px;color:#003F00">%</div><div class="ab" style="left:70px;top:183px;width:567px;height:1px;background:#C0C0C0"></div><div class="ab" style="left:701px;top:183px;width:554px;height:1px;background:#C0C0C0"></div><div class="ab" style="left:8px;top:161px;width:62px;height:23px;background:#008000;border-top:1px solid #fff;border-left:1px solid #fff;border-right:1px solid #000;border-bottom:1px solid #000;box-shadow:inset -1px -1px 0 #ACA899"></div><div class="ab" style="left:637px;top:161px;width:64px;height:23px;background:#008000;border-top:1px solid #fff;border-left:2px solid #C0C0C0;border-right:2px solid #C0C0C0;border-bottom:2px solid #C0C0C0;box-shadow:inset 1px 0 0 #fff"></div><div class="row" style="left:10px;top:161px;color:#003F00">66</div><div class="row" style="left:73px;top:161px;color:#003F00">Coolant Temp</div><div class="row" style="left:451px;top:161px;color:#003F00">61</div><div class="row" style="left:554px;top:161px;color:#003F00">°C</div><div class="row" style="left:641px;top:161px;color:#003F00">85</div><div class="row" style="left:704px;top:161px;color:#003F00">Engine SPD</div><div class="row" style="left:1083px;top:161px;color:#003F00">1184.3</div><div class="row" style="left:1186px;top:161px;color:#003F00">RPM</div><div class="ab" style="left:70px;top:206px;width:567px;height:1px;background:#C0C0C0"></div><div class="ab" style="left:701px;top:206px;width:554px;height:1px;background:#C0C0C0"></div><div class="ab" style="left:8px;top:184px;width:62px;height:23px;background:#008000;border-top:1px solid #fff;border-left:1px solid #fff;border-right:1px solid #000;border-bottom:1px solid #000;box-shadow:inset -1px -1px 0 #ACA899"></div><div class="ab" style="left:637px;top:184px;width:64px;height:23px;background:#008000;border-top:1px solid #fff;border-left:2px solid #C0C0C0;border-right:2px solid #C0C0C0;border-bottom:2px solid #C0C0C0;box-shadow:inset 1px 0 0 #fff"></div><div class="row" style="left:10px;top:184px;color:#003F00">87</div><div class="row" style="left:73px;top:184px;color:#003F00">Electromagnetic Clutch Current</div><div class="row" style="left:451px;top:184px;color:#003F00">0.000</div><div class="row" style="left:554px;top:184px;color:#003F00">A</div><div class="row" style="left:641px;top:184px;color:#003F00">88</div><div class="row" style="left:704px;top:184px;color:#003F00">EVAP VSV</div><div class="row" style="left:1083px;top:184px;color:#003F00">OFF</div><div class="ab" style="left:70px;top:229px;width:567px;height:1px;background:#C0C0C0"></div><div class="ab" style="left:701px;top:229px;width:554px;height:1px;background:#C0C0C0"></div><div class="ab" style="left:8px;top:207px;width:62px;height:23px;background:#008000;border-top:1px solid #fff;border-left:1px solid #fff;border-right:1px solid #000;border-bottom:1px solid #000;box-shadow:inset -1px -1px 0 #ACA899"></div><div class="ab" style="left:637px;top:207px;width:64px;height:23px;background:#008000;border-top:1px solid #fff;border-left:2px solid #C0C0C0;border-right:2px solid #C0C0C0;border-bottom:2px solid #C0C0C0;box-shadow:inset 1px 0 0 #fff"></div><div class="row" style="left:10px;top:207px;color:#003F00">89</div><div class="row" style="left:73px;top:207px;color:#003F00">Fail Safe Drive</div><div class="row" style="left:451px;top:207px;color:#003F00">OFF</div><div class="row" style="left:641px;top:207px;color:#003F00">90</div><div class="row" style="left:704px;top:207px;color:#003F00">FC IDL</div><div class="row" style="left:1083px;top:207px;color:#003F00">OFF</div><div class="ab" style="left:70px;top:252px;width:567px;height:1px;background:#C0C0C0"></div><div class="ab" style="left:701px;top:252px;width:554px;height:1px;background:#C0C0C0"></div><div class="ab" style="left:8px;top:230px;width:62px;height:23px;background:#008000;border-top:1px solid #fff;border-left:1px solid #fff;border-right:1px solid #000;border-bottom:1px solid #000;box-shadow:inset -1px -1px 0 #ACA899"></div><div class="ab" style="left:637px;top:230px;width:64px;height:23px;background:#008000;border-top:1px solid #fff;border-left:2px solid #C0C0C0;border-right:2px solid #C0C0C0;border-bottom:2px solid #C0C0C0;box-shadow:inset 1px 0 0 #fff"></div><div class="row" style="left:10px;top:230px;color:#003F00">92</div><div class="row" style="left:73px;top:230px;color:#003F00">FC TAU</div><div class="row" style="left:451px;top:230px;color:#003F00">OFF</div><div class="row" style="left:641px;top:230px;color:#003F00">96</div><div class="row" style="left:704px;top:230px;color:#003F00">Fuel Press Up VSV</div><div class="row" style="left:1083px;top:230px;color:#003F00">OFF</div><div class="ab" style="left:70px;top:275px;width:567px;height:1px;background:#C0C0C0"></div><div class="ab" style="left:701px;top:275px;width:554px;height:1px;background:#C0C0C0"></div><div class="ab" style="left:8px;top:253px;width:62px;height:23px;background:#008000;border-top:1px solid #fff;border-left:1px solid #fff;border-right:1px solid #000;border-bottom:1px solid #000;box-shadow:inset -1px -1px 0 #ACA899"></div><div class="ab" style="left:637px;top:253px;width:64px;height:23px;background:#008000;border-top:1px solid #fff;border-left:2px solid #C0C0C0;border-right:2px solid #C0C0C0;border-bottom:2px solid #C0C0C0;box-shadow:inset 1px 0 0 #fff"></div><div class="row" style="left:10px;top:253px;color:#003F00">97</div><div class="row" style="left:73px;top:253px;color:#003F00">Fuel Pump</div><div class="row" style="left:451px;top:253px;color:#003F00">L</div><div class="row" style="left:641px;top:253px;color:#003F00">103</div><div class="row" style="left:704px;top:253px;color:#003F00">IGN Advance</div><div class="row" style="left:1083px;top:253px;color:#003F00">15.0</div><div class="row" style="left:1186px;top:253px;color:#003F00">Deg</div><div class="ab" style="left:70px;top:298px;width:567px;height:1px;background:#C0C0C0"></div><div class="ab" style="left:701px;top:298px;width:554px;height:1px;background:#C0C0C0"></div><div class="ab" style="left:8px;top:276px;width:62px;height:23px;background:#008000;border-top:1px solid #fff;border-left:1px solid #fff;border-right:1px solid #000;border-bottom:1px solid #000;box-shadow:inset -1px -1px 0 #ACA899"></div><div class="ab" style="left:637px;top:276px;width:64px;height:23px;background:#008000;border-top:1px solid #fff;border-left:2px solid #C0C0C0;border-right:2px solid #C0C0C0;border-bottom:2px solid #C0C0C0;box-shadow:inset 1px 0 0 #fff"></div><div class="row" style="left:10px;top:276px;color:#003F00">104</div><div class="row" style="left:73px;top:276px;color:#003F00">IGNITION</div><div class="row" style="left:451px;top:276px;color:#003F00">205</div><div class="row" style="left:641px;top:276px;color:#003F00">106</div><div class="row" style="left:704px;top:276px;color:#003F00">Injector</div><div class="row" style="left:1083px;top:276px;color:#003F00">2.8</div><div class="row" style="left:1186px;top:276px;color:#003F00">ms</div><div class="ab" style="left:70px;top:321px;width:567px;height:1px;background:#C0C0C0"></div><div class="ab" style="left:701px;top:321px;width:554px;height:1px;background:#C0C0C0"></div><div class="ab" style="left:8px;top:299px;width:62px;height:23px;background:#008000;border-top:1px solid #fff;border-left:1px solid #fff;border-right:1px solid #000;border-bottom:1px solid #000;box-shadow:inset -1px -1px 0 #ACA899"></div><div class="ab" style="left:637px;top:299px;width:64px;height:23px;background:#008000;border-top:1px solid #fff;border-left:2px solid #C0C0C0;border-right:2px solid #C0C0C0;border-bottom:2px solid #C0C0C0;box-shadow:inset 1px 0 0 #fff"></div><div class="row" style="left:10px;top:299px;color:#003F00">108</div><div class="row" style="left:73px;top:299px;color:#003F00">INTK Air CTL VSV</div><div class="row" style="left:451px;top:299px;color:#003F00">OFF</div><div class="row" style="left:641px;top:299px;color:#003F00">109</div><div class="row" style="left:704px;top:299px;color:#003F00">Intake Air</div><div class="row" style="left:1083px;top:299px;color:#003F00">9</div><div class="row" style="left:1186px;top:299px;color:#003F00">°C</div><div class="ab" style="left:70px;top:344px;width:567px;height:1px;background:#C0C0C0"></div><div class="ab" style="left:701px;top:344px;width:554px;height:1px;background:#C0C0C0"></div><div class="ab" style="left:8px;top:322px;width:62px;height:23px;background:#008000;border-top:1px solid #fff;border-left:1px solid #fff;border-right:1px solid #000;border-bottom:1px solid #000;box-shadow:inset -1px -1px 0 #ACA899"></div><div class="ab" style="left:637px;top:322px;width:64px;height:23px;background:#008000;border-top:1px solid #fff;border-left:2px solid #C0C0C0;border-right:2px solid #C0C0C0;border-bottom:2px solid #C0C0C0;box-shadow:inset 1px 0 0 #fff"></div><div class="row" style="left:10px;top:322px;color:#003F00">110</div><div class="row" style="left:73px;top:322px;color:#003F00">Intake CTL VSV1</div><div class="row" style="left:451px;top:322px;color:#003F00">OFF</div><div class="row" style="left:641px;top:322px;color:#003F00">121</div><div class="row" style="left:704px;top:322px;color:#003F00">Long FT #1</div><div class="row" style="left:1083px;top:322px;color:#003F00">5.4</div><div class="row" style="left:1186px;top:322px;color:#003F00">%</div><div class="ab" style="left:70px;top:367px;width:567px;height:1px;background:#C0C0C0"></div><div class="ab" style="left:701px;top:367px;width:554px;height:1px;background:#C0C0C0"></div><div class="ab" style="left:8px;top:345px;width:62px;height:23px;background:#008000;border-top:1px solid #fff;border-left:1px solid #fff;border-right:1px solid #000;border-bottom:1px solid #000;box-shadow:inset -1px -1px 0 #ACA899"></div><div class="ab" style="left:637px;top:345px;width:64px;height:23px;background:#008000;border-top:1px solid #fff;border-left:2px solid #C0C0C0;border-right:2px solid #C0C0C0;border-bottom:2px solid #C0C0C0;box-shadow:inset 1px 0 0 #fff"></div><div class="row" style="left:10px;top:345px;color:#003F00">123</div><div class="row" style="left:73px;top:345px;color:#003F00">Low</div><div class="row" style="left:451px;top:345px;color:#003F00">OFF</div><div class="row" style="left:641px;top:345px;color:#003F00">126</div><svg class="ab" style="left:684px;top:348px" width="6" height="19" viewBox="0 0 6 19"><path d="M3 0 L5.5 3 V9 L3 12 L0.5 9 V3z" fill="#f00"/><path d="M3 14 L5.5 16 L3 18.5 L0.5 16z" fill="#f00"/></svg><div class="row" style="left:704px;top:345px;color:#FF0000">MAF</div><div class="row" style="left:1083px;top:345px;color:#FF0000">0.56</div><div class="row" style="left:1186px;top:345px;color:#FF0000">gm/s</div><div class="ab" style="left:70px;top:390px;width:567px;height:1px;background:#C0C0C0"></div><div class="ab" style="left:701px;top:390px;width:554px;height:1px;background:#C0C0C0"></div><div class="ab" style="left:8px;top:368px;width:62px;height:23px;background:#008000;border-top:1px solid #fff;border-left:1px solid #fff;border-right:1px solid #000;border-bottom:1px solid #000;box-shadow:inset -1px -1px 0 #ACA899"></div><div class="ab" style="left:637px;top:368px;width:64px;height:23px;background:#008000;border-top:1px solid #fff;border-left:2px solid #C0C0C0;border-right:2px solid #C0C0C0;border-bottom:2px solid #C0C0C0;box-shadow:inset 1px 0 0 #fff"></div><div class="row" style="left:10px;top:368px;color:#003F00">151</div><div class="row" style="left:73px;top:368px;color:#003F00">O2S B1 S2</div><div class="row" style="left:451px;top:368px;color:#003F00">0.760</div><div class="row" style="left:554px;top:368px;color:#003F00">V</div><div class="row" style="left:641px;top:368px;color:#003F00">159</div><div class="row" style="left:704px;top:368px;color:#003F00">Overdrive Cut SW2</div><div class="row" style="left:1083px;top:368px;color:#003F00">OFF</div><div class="ab" style="left:70px;top:413px;width:567px;height:1px;background:#C0C0C0"></div><div class="ab" style="left:701px;top:413px;width:554px;height:1px;background:#C0C0C0"></div><div class="ab" style="left:8px;top:391px;width:62px;height:23px;background:#008000;border-top:1px solid #fff;border-left:1px solid #fff;border-right:1px solid #000;border-bottom:1px solid #000;box-shadow:inset -1px -1px 0 #ACA899"></div><div class="ab" style="left:637px;top:391px;width:64px;height:23px;background:#008000;border-top:1px solid #fff;border-left:2px solid #C0C0C0;border-right:2px solid #C0C0C0;border-bottom:2px solid #C0C0C0;box-shadow:inset 1px 0 0 #fff"></div><div class="row" style="left:10px;top:391px;color:#003F00">160</div><div class="row" style="left:73px;top:391px;color:#003F00">OXS1 Test</div><div class="row" style="left:451px;top:391px;color:#003F00">0</div><div class="row" style="left:641px;top:391px;color:#003F00">161</div><div class="row" style="left:704px;top:391px;color:#003F00">OXS2 Test</div><div class="row" style="left:1083px;top:391px;color:#003F00">COMPL</div><div class="ab" style="left:70px;top:436px;width:567px;height:1px;background:#C0C0C0"></div><div class="ab" style="left:701px;top:436px;width:554px;height:1px;background:#C0C0C0"></div><div class="ab" style="left:8px;top:414px;width:62px;height:23px;background:#008000;border-top:1px solid #fff;border-left:1px solid #fff;border-right:1px solid #000;border-bottom:1px solid #000;box-shadow:inset -1px -1px 0 #ACA899"></div><div class="ab" style="left:637px;top:414px;width:64px;height:23px;background:#008000;border-top:1px solid #fff;border-left:2px solid #C0C0C0;border-right:2px solid #C0C0C0;border-bottom:2px solid #C0C0C0;box-shadow:inset 1px 0 0 #fff"></div><div class="row" style="left:10px;top:414px;color:#003F00">163</div><div class="row" style="left:73px;top:414px;color:#003F00">PS Oil Press SW</div><div class="row" style="left:451px;top:414px;color:#003F00">OFF</div><div class="row" style="left:641px;top:414px;color:#003F00">164</div><div class="row" style="left:704px;top:414px;color:#003F00">PS Signal</div><div class="row" style="left:1083px;top:414px;color:#003F00">ON</div><div class="ab" style="left:70px;top:459px;width:567px;height:1px;background:#C0C0C0"></div><div class="ab" style="left:701px;top:459px;width:554px;height:1px;background:#C0C0C0"></div><div class="ab" style="left:8px;top:437px;width:62px;height:23px;background:#008000;border-top:1px solid #fff;border-left:1px solid #fff;border-right:1px solid #000;border-bottom:1px solid #000;box-shadow:inset -1px -1px 0 #ACA899"></div><div class="ab" style="left:637px;top:437px;width:64px;height:23px;background:#008000;border-top:1px solid #fff;border-left:2px solid #C0C0C0;border-right:2px solid #C0C0C0;border-bottom:2px solid #C0C0C0;box-shadow:inset 1px 0 0 #fff"></div><div class="row" style="left:10px;top:437px;color:#003F00">165</div><div class="row" style="left:73px;top:437px;color:#003F00">Purge cut VSV</div><div class="row" style="left:451px;top:437px;color:#003F00">OFF</div><div class="row" style="left:641px;top:437px;color:#003F00">176</div><div class="row" style="left:704px;top:437px;color:#003F00">Short FT #1</div><div class="row" style="left:1083px;top:437px;color:#003F00">-3.9</div><div class="row" style="left:1186px;top:437px;color:#003F00">%</div><div class="ab" style="left:448px;top:0;width:1px;height:459px;background:#C0C0C0"></div><div class="ab" style="left:551px;top:0;width:1px;height:459px;background:#C0C0C0"></div><div class="ab" style="left:1080px;top:0;width:1px;height:459px;background:#C0C0C0"></div><div class="ab" style="left:1183px;top:0;width:1px;height:459px;background:#C0C0C0"></div></div><div class="ab" style="left:0;top:610px;width:1255px;height:77px;overflow:hidden"><div class="ab" style="left:70px;top:22px;width:567px;height:1px;background:#C0C0C0"></div><div class="ab" style="left:701px;top:22px;width:554px;height:1px;background:#C0C0C0"></div><div class="ab" style="left:8px;top:0px;width:62px;height:23px;background:#FFFF00;border-top:1px solid #fff;border-left:1px solid #fff;border-right:1px solid #000;border-bottom:1px solid #000;box-shadow:inset -1px -1px 0 #ACA899"></div><div class="ab" style="left:637px;top:0px;width:64px;height:23px;background:#FFFF00;border-top:1px solid #fff;border-left:2px solid #C0C0C0;border-right:2px solid #C0C0C0;border-bottom:2px solid #C0C0C0;box-shadow:inset 1px 0 0 #fff"></div><div class="row" style="left:10px;top:0px;color:#003F00">2</div><div class="row" style="left:73px;top:0px;color:#003F00">2nd</div><div class="row" style="left:451px;top:0px;color:#003F00">OFF</div><div class="row" style="left:641px;top:0px;color:#003F00">3</div><div class="row" style="left:704px;top:0px;color:#003F00">3rd</div><div class="row" style="left:1083px;top:0px;color:#003F00">OFF</div><div class="ab" style="left:70px;top:45px;width:567px;height:1px;background:#C0C0C0"></div><div class="ab" style="left:701px;top:45px;width:554px;height:1px;background:#C0C0C0"></div><div class="ab" style="left:8px;top:23px;width:62px;height:23px;background:#FFFF00;border-top:1px solid #fff;border-left:1px solid #fff;border-right:1px solid #000;border-bottom:1px solid #000;box-shadow:inset -1px -1px 0 #ACA899"></div><div class="ab" style="left:637px;top:23px;width:64px;height:23px;background:#FFFF00;border-top:1px solid #fff;border-left:2px solid #C0C0C0;border-right:2px solid #C0C0C0;border-bottom:2px solid #C0C0C0;box-shadow:inset 1px 0 0 #fff"></div><div class="row" style="left:10px;top:23px;color:#003F00">4</div><div class="row" style="left:73px;top:23px;color:#003F00">40 CYCLES</div><div class="row" style="left:451px;top:23px;color:#003F00">COMPL</div><div class="row" style="left:641px;top:23px;color:#003F00">5</div><div class="row" style="left:704px;top:23px;color:#003F00">4th(M)/Drive</div><div class="row" style="left:1083px;top:23px;color:#003F00">1</div><div class="ab" style="left:70px;top:68px;width:567px;height:1px;background:#C0C0C0"></div><div class="ab" style="left:701px;top:68px;width:554px;height:1px;background:#C0C0C0"></div><div class="ab" style="left:8px;top:46px;width:62px;height:23px;background:#FFFF00;border-top:1px solid #fff;border-left:1px solid #fff;border-right:1px solid #000;border-bottom:1px solid #000;box-shadow:inset -1px -1px 0 #ACA899"></div><div class="ab" style="left:637px;top:46px;width:64px;height:23px;background:#FFFF00;border-top:1px solid #fff;border-left:2px solid #C0C0C0;border-right:2px solid #C0C0C0;border-bottom:2px solid #C0C0C0;box-shadow:inset 1px 0 0 #fff"></div><div class="row" style="left:10px;top:46px;color:#003F00">11</div><div class="row" style="left:73px;top:46px;color:#003F00">AF2 Test</div><div class="row" style="left:451px;top:46px;color:#003F00">COMPL</div><div class="row" style="left:641px;top:46px;color:#003F00">53</div><div class="row" style="left:704px;top:46px;color:#003F00">AS Test</div><div class="row" style="left:1083px;top:46px;color:#003F00">COMPL</div><div class="ab" style="left:70px;top:91px;width:567px;height:1px;background:#C0C0C0"></div><div class="ab" style="left:701px;top:91px;width:554px;height:1px;background:#C0C0C0"></div><div class="ab" style="left:8px;top:69px;width:62px;height:23px;background:#FFFF00;border-top:1px solid #fff;border-left:1px solid #fff;border-right:1px solid #000;border-bottom:1px solid #000;box-shadow:inset -1px -1px 0 #ACA899"></div><div class="ab" style="left:637px;top:69px;width:64px;height:23px;background:#FFFF00;border-top:1px solid #fff;border-left:2px solid #C0C0C0;border-right:2px solid #C0C0C0;border-bottom:2px solid #C0C0C0;box-shadow:inset 1px 0 0 #fff"></div><div class="row" style="left:10px;top:69px;color:#003F00">12</div><div class="row" style="left:73px;top:69px;color:#003F00">Second Switch</div><div class="row" style="left:451px;top:69px;color:#003F00">OFF</div><div class="row" style="left:641px;top:69px;color:#003F00">61</div><div class="row" style="left:704px;top:69px;color:#003F00">Number of emission related DTC</div><div class="row" style="left:1083px;top:69px;color:#003F00">1</div><div class="ab" style="left:448px;top:0;width:1px;height:77px;background:#C0C0C0"></div><div class="ab" style="left:551px;top:0;width:1px;height:77px;background:#C0C0C0"></div><div class="ab" style="left:1080px;top:0;width:1px;height:77px;background:#C0C0C0"></div><div class="ab" style="left:1183px;top:0;width:1px;height:77px;background:#C0C0C0"></div></div><div class="ab" style="left:6px;top:144px;width:1267px;height:1px;background:#716F64"></div><div class="ab" style="left:7px;top:145px;width:1266px;height:1px;background:#ACA899"></div><div class="ab" style="left:6px;top:144px;width:1px;height:462px;background:#716F64"></div><div class="ab" style="left:7px;top:145px;width:1px;height:461px;background:#ACA899"></div><div class="ab" style="left:6px;top:606px;width:1267px;height:1px;background:#F1EFE2"></div><div class="ab" style="left:6px;top:607px;width:1267px;height:1px;background:#fff"></div><div class="ab" style="left:6px;top:608px;width:1267px;height:1px;background:#716F64"></div><div class="ab" style="left:7px;top:609px;width:1266px;height:1px;background:#ACA899"></div><div class="ab" style="left:6px;top:608px;width:1px;height:79px;background:#716F64"></div><div class="ab" style="left:7px;top:609px;width:1px;height:78px;background:#ACA899"></div><div class="ab" style="left:6px;top:687px;width:1267px;height:1px;background:#fff"></div><div class="ab" style="left:4px;top:688px;width:1271px;height:2px;background:#ACA899"></div><div class="ab" style="left:4px;top:690px;width:1275px;height:1px;background:#fff"></div><div class="ab" style="left:1273px;top:118px;width:1px;height:570px;background:#fff"></div><div class="ab" style="left:1275px;top:91px;width:2px;height:599px;background:#ACA899"></div><div class="ab" style="left:1278px;top:87px;width:2px;height:652px;background:#716F64"></div><div class="ab" style="left:6px;top:118px;width:1267px;height:2px;background:#fff"></div><div class="ab" style="left:6px;top:118px;width:1px;height:26px;background:#fff"></div><div class="ab" style="left:7px;top:143px;width:1266px;height:1px;background:#ACA899"></div><svg class="ab" style="left:33px;top:125px" width="11" height="8" viewBox="0 0 11 8"><path d="M5.5 0.3v7.4 M0.5 1.8L10.5 6.2 M0.5 6.2L10.5 1.8" stroke="#000" stroke-width="1.1"/></svg><div class="ab" style="left:68px;top:120px;width:1px;height:23px;background:#ACA899"></div><div class="ab" style="left:69px;top:119px;width:1px;height:25px;background:#716F64"></div><div class="ab" style="left:70px;top:120px;width:1px;height:23px;background:#fff"></div><div class="hd" style="left:71px;width:378px">Description</div><div class="ab" style="left:447px;top:120px;width:1px;height:23px;background:#ACA899"></div><div class="ab" style="left:448px;top:119px;width:1px;height:25px;background:#716F64"></div><div class="ab" style="left:449px;top:120px;width:1px;height:23px;background:#fff"></div><div class="hd" style="left:450px;width:102px">Value</div><div class="ab" style="left:550px;top:120px;width:1px;height:23px;background:#ACA899"></div><div class="ab" style="left:551px;top:119px;width:1px;height:25px;background:#716F64"></div><div class="ab" style="left:552px;top:120px;width:1px;height:23px;background:#fff"></div><div class="hd" style="left:553px;width:85px">Units</div><div class="ab" style="left:636px;top:120px;width:1px;height:23px;background:#ACA899"></div><div class="ab" style="left:637px;top:119px;width:1px;height:25px;background:#716F64"></div><div class="ab" style="left:638px;top:120px;width:1px;height:23px;background:#fff"></div><svg class="ab" style="left:664px;top:125px" width="11" height="8" viewBox="0 0 11 8"><path d="M5.5 0.3v7.4 M0.5 1.8L10.5 6.2 M0.5 6.2L10.5 1.8" stroke="#000" stroke-width="1.1"/></svg><div class="ab" style="left:700px;top:120px;width:1px;height:23px;background:#ACA899"></div><div class="ab" style="left:701px;top:119px;width:1px;height:25px;background:#716F64"></div><div class="ab" style="left:702px;top:120px;width:1px;height:23px;background:#fff"></div><div class="hd" style="left:703px;width:379px">Description</div><div class="ab" style="left:1080px;top:120px;width:1px;height:23px;background:#ACA899"></div><div class="ab" style="left:1081px;top:119px;width:1px;height:25px;background:#716F64"></div><div class="ab" style="left:1082px;top:120px;width:1px;height:23px;background:#fff"></div><div class="hd" style="left:1083px;width:102px">Value</div><div class="ab" style="left:1183px;top:120px;width:1px;height:23px;background:#ACA899"></div><div class="ab" style="left:1184px;top:119px;width:1px;height:25px;background:#716F64"></div><div class="ab" style="left:1185px;top:120px;width:1px;height:23px;background:#fff"></div><div class="hd" style="left:1186px;width:85px">Units</div><div class="ab" style="left:1269px;top:120px;width:1px;height:23px;background:#ACA899"></div><div class="ab" style="left:1270px;top:119px;width:1px;height:25px;background:#716F64"></div><div class="ab" style="left:1271px;top:120px;width:1px;height:23px;background:#fff"></div><div class="ab" style="left:1255px;top:147px;width:17px;height:460px;background:linear-gradient(to right,#F3F1EC,#FEFEFB)"></div><div class="ab" style="left:1256px;top:148px;width:16px;height:16px;border:1px solid #fff;border-radius:2px;background:linear-gradient(135deg,#C8DAFF,#B4CCFA);box-shadow:0 1px 0 #A3BAE9"><svg class="ab" style="left:0;top:0" width="16" height="16"><path d="M4 9 L8 5 L12 9" fill="none" stroke="#4D6185" stroke-width="2"/></svg></div><div class="ab" style="left:1256px;top:165px;width:16px;height:16px;border:1px solid #fff;border-radius:2px;background:linear-gradient(135deg,#C8DAFF,#B4CCFA);box-shadow:0 1px 0 #A3BAE9"><svg class="ab" style="left:0;top:0" width="16" height="16"><path d="M4 4.5h7M4 6.5h7M4 8.5h7M4 10.5h7" stroke="#fff" stroke-width="1"/><path d="M5 5.5h7M5 7.5h7M5 9.5h7M5 11.5h7" stroke="#8CB0F8" stroke-width="1"/></svg></div><div class="ab" style="left:1256px;top:590px;width:16px;height:16px;border:1px solid #fff;border-radius:2px;background:linear-gradient(135deg,#C8DAFF,#B4CCFA);box-shadow:0 1px 0 #A3BAE9"><svg class="ab" style="left:0;top:0" width="16" height="16"><path d="M4 6 L8 10 L12 6" fill="none" stroke="#4D6185" stroke-width="2"/></svg></div><div class="ab" style="left:1255px;top:610px;width:17px;height:77px;background:linear-gradient(to right,#F3F1EC,#FEFEFB)"></div><div class="ab" style="left:1256px;top:611px;width:16px;height:16px;border:1px solid #fff;border-radius:2px;background:linear-gradient(135deg,#C8DAFF,#B4CCFA);box-shadow:0 1px 0 #A3BAE9"><svg class="ab" style="left:0;top:0" width="16" height="16"><path d="M4 9 L8 5 L12 9" fill="none" stroke="#4D6185" stroke-width="2"/></svg></div><div class="ab" style="left:1256px;top:628px;width:16px;height:16px;border:1px solid #fff;border-radius:2px;background:linear-gradient(135deg,#C8DAFF,#B4CCFA);box-shadow:0 1px 0 #A3BAE9"><svg class="ab" style="left:0;top:0" width="16" height="16"><path d="M4 4.5h7M4 6.5h7M4 8.5h7M4 10.5h7" stroke="#fff" stroke-width="1"/><path d="M5 5.5h7M5 7.5h7M5 9.5h7M5 11.5h7" stroke="#8CB0F8" stroke-width="1"/></svg></div><div class="ab" style="left:1256px;top:670px;width:16px;height:16px;border:1px solid #fff;border-radius:2px;background:linear-gradient(135deg,#C8DAFF,#B4CCFA);box-shadow:0 1px 0 #A3BAE9"><svg class="ab" style="left:0;top:0" width="16" height="16"><path d="M4 6 L8 10 L12 6" fill="none" stroke="#4D6185" stroke-width="2"/></svg></div><div class="ab" style="left:4px;top:690px;width:2px;height:48px;background:#fff"></div><div class="ab" style="left:4px;top:738px;width:1276px;height:1px;background:#ACA899"></div><div class="ab" style="left:0;top:739px;width:1280px;height:1px;background:#716F64"></div><div class="ab" style="left:1px;top:741px;width:307px;height:1px;background:#fff"></div><div class="ab" style="left:1px;top:741px;width:1px;height:28px;background:#fff"></div><div class="ab" style="left:308px;top:741px;width:1px;height:28px;background:#ACA899"></div><div class="ab" style="left:0;top:769px;width:1280px;height:1px;background:#F5F3EA"></div><div class="ab" style="left:5px;top:690px;width:180px;height:23px;border-top:1px solid #fff;border-left:1px solid #fff;border-right:1px solid #716F64;border-bottom:1px solid #716F64;box-shadow:inset -1px -1px 0 #ACA899"></div><div class="t" style="left:5px;top:692px;width:180px;text-align:center;font-size:11px;line-height:20px;font-weight:bold;color:#000;letter-spacing:0.45px">Choose Parameter Set</div><div class="ab" style="left:5px;top:714px;width:59px;height:22px;border:1px solid #000;box-shadow:inset 1px 1px 0 #fff, inset -1px -1px 0 #ACA899;background:#ECE9D8"><svg class="ab" style="left:21px;top:2px" width="17" height="17"><g fill="none" stroke="#808080" stroke-width="1.2"><path d="M4.5 3.5 h5 l1.5 4 l3.5 -3.5 M4.5 3.5 v10 h9 v-7"/><path d="M1 1 l3.5 2.5 M0 9.5 h4.5 M1 15.5 l3.5 -2 M9 13.5 v2.5 M13.5 13.5 l2.5 2 M13.5 9.5 h3 M9.5 1 v2.5"/></g></svg></div><div class="ab" style="left:65px;top:714px;width:59px;height:22px;border:1px solid #000;box-shadow:inset 1px 1px 0 #fff, inset -1px -1px 0 #ACA899;background:#ECE9D8"><svg class="ab" style="left:20px;top:2px" width="18" height="17"><g fill="none" stroke="#808080" stroke-width="1.2"><path d="M7.5 1.5 h6 l3 3 v11 h-9z"/><path d="M9 4h4M10 7h5M10 10h5M12 13h3" stroke-dasharray="1 1"/><path d="M6 1 l6 7"/><path d="M1.5 8.5 h6 v7 h-6z" fill="#ECE9D8"/><path d="M3 10h4M3 12h4"/></g></svg></div><div class="ab" style="left:125px;top:714px;width:60px;height:22px;border:1px solid #000;box-shadow:inset 1px 1px 0 #fff, inset -1px -1px 0 #ACA899;background:#ECE9D8"><svg class="ab" style="left:18px;top:2px" width="16" height="17"><g fill="none" stroke="#808080" stroke-width="1.2"><path d="M5.5 1.5h5v2h-5z"/><path d="M1.5 3.5h13v2h-13z"/><path d="M2.5 5.5v9.5h11v-9.5M5.5 7v7M8 7v7M10.5 7v7"/><path d="M0 9h2M14 9h2"/></g></svg></div><div class="ab" style="left:190px;top:692px;width:255px;height:44px;border-top:1px solid #ACA899;border-left:1px solid #ACA899;border-right:1px solid #fff;border-bottom:1px solid #fff;background:#000"></div><div class="t" style="left:189px;top:695px;width:253px;text-align:center;font-size:12.5px;line-height:16px;font-weight:bold;color:#00FF00;letter-spacing:0.2px">Scan</div><div class="t" style="left:191px;top:714px;width:253px;text-align:center;font-size:12.5px;line-height:16px;font-weight:bold;color:#FFFF00;letter-spacing:-0.7px">TOYOTA ENGINEEFI_06</div><div class="ab" style="left:448px;top:692px;width:101px;height:42px;border:1px solid #ACA899;box-shadow:inset 1px 1px 0 #fff, 1px 1px 0 #fff"></div><div class="ab" style="left:455px;top:695px;width:30px;height:34px;border-top:1px solid #fff;border-left:1px solid #fff;border-right:1px solid #716F64;border-bottom:1px solid #716F64;box-shadow:inset -1px -1px 0 #ACA899"></div><div class="ab" style="left:456px;top:711px;width:28px;height:1px;background:#ACA899"></div><div class="ab" style="left:456px;top:712px;width:28px;height:1px;background:#fff"></div><svg class="ab" style="left:466px;top:702px" width="8" height="5" viewBox="0 0 8 5"><path d="M0 4h7L3.5 0z" fill="#000"/></svg><svg class="ab" style="left:466px;top:718px" width="8" height="5" viewBox="0 0 8 5"><path d="M0 0h7L3.5 4z" fill="#000"/></svg><div class="t" style="left:492px;top:701px;font-size:14px;line-height:18px;font-weight:bold;color:#000;letter-spacing:-0.1px">Reorder</div><div class="ab" style="left:554px;top:692px;width:73px;height:22px;border:1px solid #000;box-shadow:inset 1px 1px 0 #fff, inset -1px -1px 0 #716F64, inset -2px -2px 0 #ACA899;background:#ECE9D8"></div><div class="t" style="left:554px;top:694px;width:73px;text-align:center;font-size:11px;line-height:18px;font-weight:bold;color:#000;letter-spacing:0.5px">Setup...</div><div class="ab" style="left:554px;top:715px;width:73px;height:21px;border-top:1px solid #fff;border-left:1px solid #fff;border-right:1px solid #716F64;border-bottom:1px solid #716F64;box-shadow:inset -1px -1px 0 #ACA899;background:#ECE9D8"></div><svg class="ab" style="left:571px;top:718px" width="14" height="18" viewBox="0 0 14 18"><path d="M3.5 5.5 C3.5 1 12.5 1 12.5 5.5 C12.5 9.5 8 9 7.5 12.5" fill="none" stroke="#005870" stroke-width="3.4"/><path d="M2.5 4.5 C2.5 0 11.5 0 11.5 4.5 C11.5 8.5 7 8 6.5 11.5" fill="none" stroke="#20C8E0" stroke-width="3"/><circle cx="7" cy="15.5" r="2" fill="#005870"/><circle cx="6.3" cy="14.8" r="1.8" fill="#20C8E0"/></svg><div class="t" style="left:589px;top:716px;font-size:11px;line-height:19px;font-weight:bold;color:#000;letter-spacing:0.5px">Help</div><div class="ab" style="left:4px;top:743px;width:2px;height:24px;border-left:1px solid #fff;border-right:1px solid #ACA899"></div><div class="ab" style="left:7px;top:743px;width:2px;height:24px;border-left:1px solid #fff;border-right:1px solid #ACA899"></div><div class="ab dither" style="left:11px;top:743px;width:24px;height:24px;border-left:1px solid #ACA899;border-top:1px solid #ACA899;border-right:1px solid #fff;border-bottom:1px solid #fff"></div><svg class="ab" style="left:16px;top:748px" width="15" height="15" viewBox="0 0 15 15"><rect x="0" y="0" width="15" height="15" fill="#00FFFF"/><rect x="1" y="1" width="13" height="13" fill="#000"/><rect x="2" y="2" width="11" height="11" fill="#F8F7F2"/><circle cx="7.5" cy="7.5" r="2.5" fill="#000"/></svg><svg class="ab" style="left:40px;top:749px" width="14" height="14" viewBox="0 0 14 14"><rect x=".5" y=".5" width="13" height="13" fill="none" stroke="#fff"/><rect x="0" y="0" width="13" height="13" fill="none" stroke="#ACA899"/><path d="M5 3l5 4l-5 4z" fill="#ACA899"/></svg><svg class="ab" style="left:63px;top:748px" width="15" height="15" viewBox="0 0 15 15"><rect x="0" y="0" width="15" height="15" fill="#00FFFF"/><rect x="1" y="1" width="13" height="13" fill="#000"/><rect x="2" y="2" width="11" height="11" fill="#ECE9D8"/><rect x="5" y="5" width="2" height="5" fill="#000"/><rect x="8" y="5" width="2" height="5" fill="#000"/></svg><svg class="ab" style="left:87px;top:748px" width="15" height="15" viewBox="0 0 15 15"><rect x="0" y="0" width="15" height="15" fill="#00FFFF"/><rect x="1" y="1" width="13" height="13" fill="#000"/><rect x="2" y="2" width="11" height="11" fill="#ECE9D8"/><rect x="5" y="5" width="5" height="5" fill="#000"/></svg><svg class="ab" style="left:111px;top:747px" width="16" height="16" viewBox="0 0 16 16"><path d="M1.5 0 h12 l1.5 1.5 v13 l-1.5 1.5 h-12 l-1.5 -1.5 v-13z" fill="#000"/><rect x="3" y="0" width="9" height="1.2" fill="#F00"/><rect x="3" y="1.2" width="9" height="6.8" fill="#fff"/><rect x="4" y="10" width="7" height="6" fill="#B8B8B8"/><rect x="6" y="11" width="2" height="2" fill="#000"/><rect x="13" y="2" width="1" height="1" fill="#808080"/></svg><svg class="ab" style="left:134px;top:746px" width="19" height="18" viewBox="0 0 19 18"><path d="M1 4 L4 1 L9 5 L6 9z" fill="#000"/><path d="M3.5 6.5 L7.5 2.5 L9 4 L5 8z" fill="#00E0F0"/><path d="M6 9 L9 5 L12 7 L14 9 L14 13 L12 16 L10 15z" fill="#FFFF40" stroke="#000" stroke-width=".9"/><path d="M10 10 l2 2 M11 8.5 l2 2" stroke="#000" stroke-width=".7"/><rect x="13.5" y="1" width="2" height="14" fill="#FFFF00" stroke="#000" stroke-width=".8"/><rect x="1" y="15" width="7" height="1" fill="#909090"/><rect x="12.5" y="15" width="3" height="1.5" fill="#F00"/></svg><div class="ab" style="left:157px;top:743px;width:2px;height:24px;border-left:1px solid #ACA899;border-right:1px solid #fff"></div><div class="ab" style="left:161px;top:743px;width:135px;height:25px;background:#000;border-top:1px solid #ACA899;border-left:1px solid #ACA899;border-right:1px solid #fff;border-bottom:1px solid #fff"></div><div class="t" style="left:167px;top:748px;font-size:12.5px;line-height:19px;font-weight:bold;color:#FFFF00">17&nbsp; 204.25</div><div class="ab" style="left:297px;top:743px;width:2px;height:24px;border-left:1px solid #ACA899;border-right:1px solid #fff"></div><div class="ab" style="left:303px;top:743px;width:2px;height:24px;border-left:1px solid #ACA899;border-right:1px solid #fff"></div><div class="ab" style="left:0;top:770px;width:1280px;height:4px;background:linear-gradient(to bottom,#2658C8 0px,#3A7AE6 1px,#4A88EE 4px)"></div><div class="ab" style="left:0;top:770px;width:93px;height:4px;border-top-right-radius:6px;background:linear-gradient(to bottom,#2E7A3E 0px,#5DA95D 1px,#86BF86 4px)"></div><div class="ab" style="left:1205px;top:770px;width:75px;height:4px;background:#0F9CEF"></div></div></body></html>
